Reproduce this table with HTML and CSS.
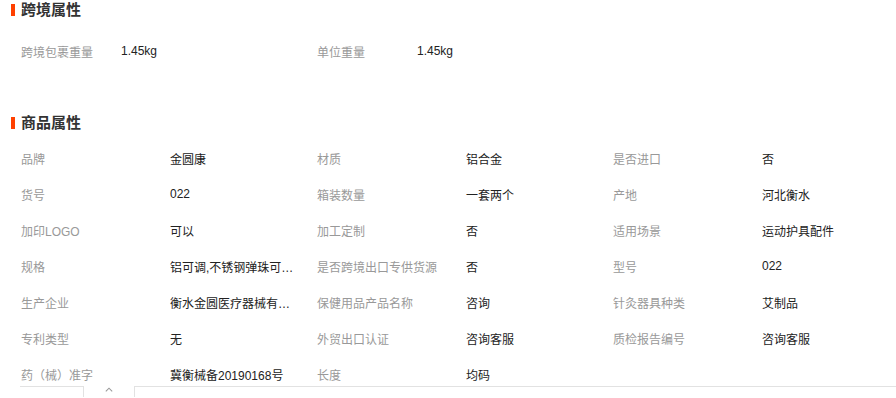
FILE: index.html
```html
<!DOCTYPE html>
<html lang="zh-CN">
<head>
<meta charset="utf-8">
<title>商品属性</title>
<link rel="stylesheet" href="styles.css">
</head>
<body>
<div class="page">
  <h3 class="title"><span class="bar"></span><span>跨境属性</span></h3>
  <div class="cb-grid">
    <div class="cb-cell"><span class="label cb-label">跨境包裹重量</span><span class="value">1.45kg</span></div>
    <div class="cb-cell"><span class="label cb-label">单位重量</span><span class="value">1.45kg</span></div>
  </div>

  <h3 class="title title-2"><span class="bar"></span><span>商品属性</span></h3>
  <div class="attr-grid">
    <div class="cell"><span class="label">品牌</span><span class="value">金圆康</span></div>
    <div class="cell"><span class="label">材质</span><span class="value">铝合金</span></div>
    <div class="cell"><span class="label">是否进口</span><span class="value">否</span></div>

    <div class="cell"><span class="label">货号</span><span class="value">022</span></div>
    <div class="cell"><span class="label">箱装数量</span><span class="value">一套两个</span></div>
    <div class="cell"><span class="label">产地</span><span class="value">河北衡水</span></div>

    <div class="cell"><span class="label">加印LOGO</span><span class="value">可以</span></div>
    <div class="cell"><span class="label">加工定制</span><span class="value">否</span></div>
    <div class="cell"><span class="label">适用场景</span><span class="value">运动护具配件</span></div>

    <div class="cell"><span class="label">规格</span><span class="value">铝可调,不锈钢弹珠可…</span></div>
    <div class="cell"><span class="label">是否跨境出口专供货源</span><span class="value">否</span></div>
    <div class="cell"><span class="label">型号</span><span class="value">022</span></div>

    <div class="cell"><span class="label">生产企业</span><span class="value">衡水金圆医疗器械有…</span></div>
    <div class="cell"><span class="label">保健用品产品名称</span><span class="value">咨询</span></div>
    <div class="cell"><span class="label">针灸器具种类</span><span class="value">艾制品</span></div>

    <div class="cell"><span class="label">专利类型</span><span class="value">无</span></div>
    <div class="cell"><span class="label">外贸出口认证</span><span class="value">咨询客服</span></div>
    <div class="cell"><span class="label">质检报告编号</span><span class="value">咨询客服</span></div>

    <div class="cell"><span class="label">药（械）准字</span><span class="value">冀衡械备20190168号</span></div>
    <div class="cell"><span class="label">长度</span><span class="value">均码</span></div>
    <div class="cell"></div>
  </div>

  <div class="tabbar">
    <div class="tab-left"></div>
    <div class="tab-toggle">
      <svg class="caret" width="8" height="5" viewBox="0 0 8 5" aria-hidden="true"><path d="M0.8 4.4 L4 1.2 L7.2 4.4" fill="none" stroke="#9a9a9a" stroke-width="1.1"/></svg>
    </div>
    <div class="tab-right"></div>
  </div>
</div>
</body>
</html>
```

FILE: styles.css
```css
html, body {
  margin: 0;
  padding: 0;
  background: #fff;
  overflow: hidden;
}

.page {
  width: 896px;
  height: 398px;
  font-family: "Liberation Sans", "Noto Sans CJK SC", sans-serif;
  font-size: 12px;
  color: #333;
}

.title {
  display: flex;
  align-items: center;
  gap: 6px;
  height: 20px;
  margin: 0;
  padding-left: 11px;
  font-size: 15px;
  font-weight: bold;
  color: #333;
  line-height: 20px;
}

.bar {
  display: block;
  width: 4px;
  height: 12px;
  background: #ff4000;
}

.title-2 {
  margin-top: 44px;
}

.cb-grid {
  display: grid;
  grid-template-columns: 296px 1fr;
  margin-top: 13px;
  padding-left: 20px;
}

.cb-cell {
  display: flex;
  align-items: center;
  height: 36px;
}

.label {
  flex: none;
  width: 150px;
  color: #999;
  white-space: nowrap;
  padding-left: 1px;
  box-sizing: border-box;
}

.cb-label {
  width: 101px;
}

.value {
  color: #222;
  white-space: nowrap;
}

.attr-grid {
  display: grid;
  grid-template-columns: 296px 296px 1fr;
  row-gap: 12px;
  margin-top: 13px;
  padding-left: 20px;
}

.cell {
  display: flex;
  align-items: center;
  height: 24px;
}

.tabbar {
  display: flex;
  height: 11px;
  padding-left: 20px;
}

.tab-left {
  width: 63px;
  border-top: 1px solid #e2e2e2;
  border-right: 1px solid #e2e2e2;
}

.tab-toggle {
  width: 50px;
  display: flex;
  justify-content: center;
  align-items: flex-start;
  padding-top: 1px;
}

.caret {
  display: block;
}

.tab-right {
  flex: 1;
  border-top: 1px solid #e2e2e2;
  border-left: 1px solid #e2e2e2;
}
```
